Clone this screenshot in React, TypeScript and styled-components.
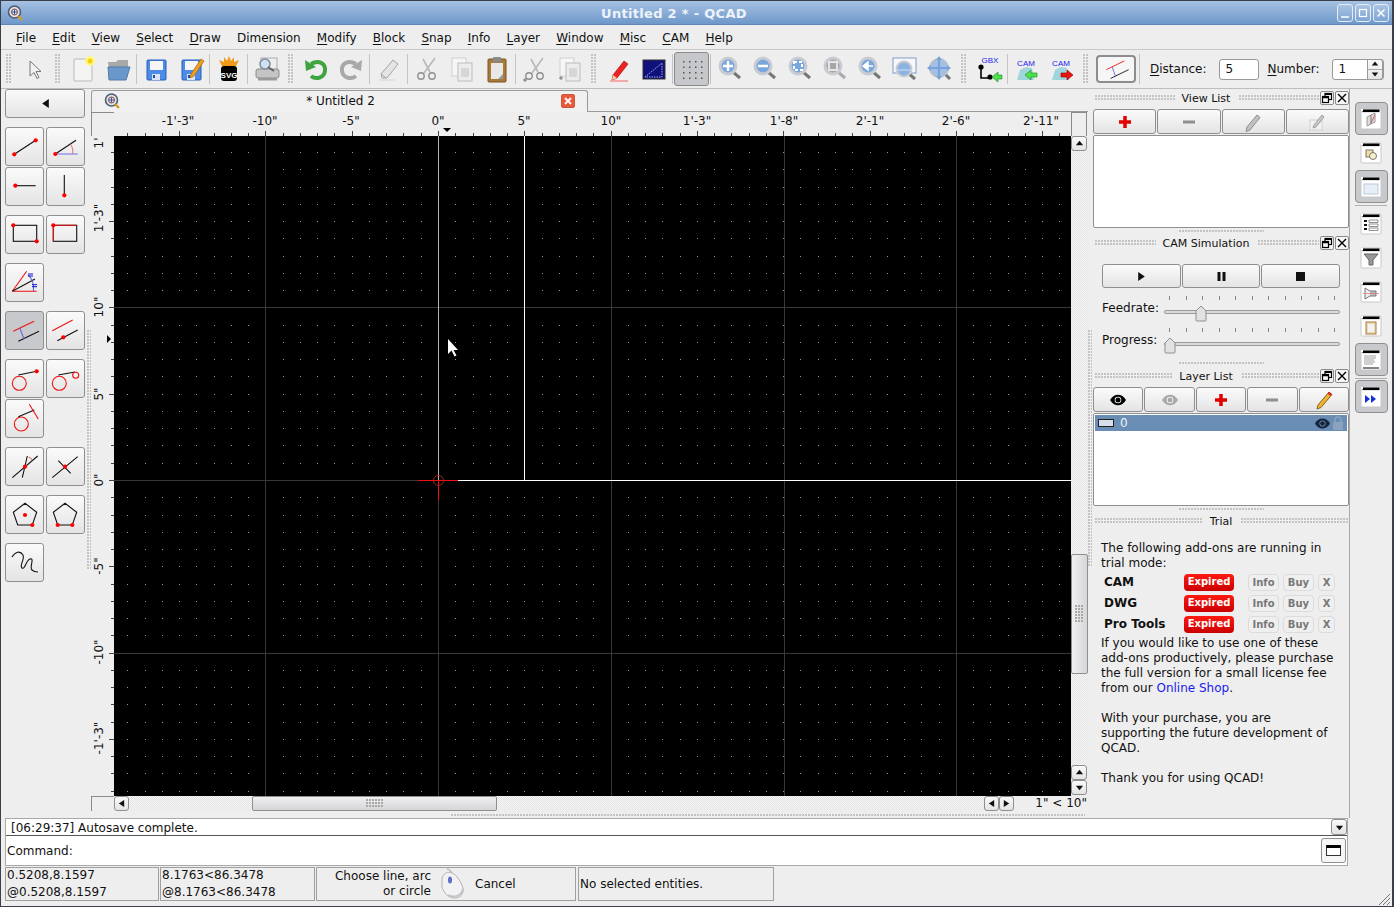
import React from "react";
import styled, { createGlobalStyle } from "styled-components";

const GlobalStyle = createGlobalStyle`
  html, body { margin: 0; padding: 0; background: #eee; }
  * { box-sizing: border-box; }
`;

const FONT = `"DejaVu Sans", "Liberation Sans", sans-serif`;
const DOTS = `radial-gradient(circle at 1px 1px, #c4c4c4 1px, transparent 1px)`;
const RAISED = `linear-gradient(#fafafa, #e4e4e4)`;

const Window = styled.div`
  width: 1394px;
  height: 907px;
  overflow: hidden;
  display: flex;
  flex-direction: column;
  background: #eeeeee;
  border: 1px solid #39404c;
  border-right-width: 2px;
  font: 12px ${FONT};
  color: #111;
`;

const TitleBar = styled.div`
  height: 24px;
  flex: none;
  display: flex;
  align-items: center;
  padding: 0 3px 0 6px;
  background: linear-gradient(#a6c1e2, #6e98ca);
  border-bottom: 1px solid #5d84b4;
`;

const TitleText = styled.div`
  flex: 1;
  padding: 1px 10px 0 0;
  text-align: center;
  color: #eef3fa;
  font-weight: bold;
  font-size: 13px;
  letter-spacing: 0.3px;
`;

const WinButton = styled.div`
  width: 16px;
  height: 18px;
  margin-left: 2px;
  border: 1px solid #e4ecf6;
  border-radius: 3px;
  background: linear-gradient(#a9c3e3, #7ea4d2);
  display: flex;
  align-items: center;
  justify-content: center;
`;

const MenuBar = styled.div`
  height: 24px;
  flex: none;
  display: flex;
  align-items: center;
  padding: 2px 0 0 7px;
`;

const MenuItem = styled.div`
  padding: 0 8px;
  margin-right: 0.15px;
  u { text-underline-offset: 2px; }
`;

const ToolBar = styled.div`
  height: 40px;
  flex: none;
  display: flex;
  align-items: center;
  padding-left: 1px;
  border-top: 1px solid #c9c9c9;
  border-bottom: 1px solid #bdbdbd;
`;

const Handle = styled.div`
  width: 14px;
  height: 30px;
  flex: none;
  display: flex;
  justify-content: center;
  &::before {
    content: "";
    width: 6px;
    background-image: ${DOTS};
    background-size: 3px 3px;
  }
`;

const Sep = styled.div`
  width: 1px;
  height: 30px;
  flex: none;
  margin: 0 1px;
  background: #c4c4c4;
`;

const ToolIcon = styled.div<{ $on?: boolean }>`
  width: 35px;
  height: 34px;
  flex: none;
  display: flex;
  align-items: center;
  justify-content: center;
  border-radius: 3px;
  ${(p) => p.$on && "background: #c6c7cb; border: 1px solid #8a8a8a;"}
`;

const OptionButton = styled.div`
  width: 40px;
  height: 28px;
  flex: none;
  margin-left: 3px;
  margin-right: 2px;
  border: 2px solid #8d8d8d;
  border-radius: 4px;
  background: #f6f6f6;
  display: flex;
  align-items: center;
  justify-content: center;
`;

const OptionLabel = styled.div<{ $left: number }>`
  margin-left: ${(p) => p.$left}px;
  u { text-underline-offset: 2px; }
`;

const TextBox = styled.div<{ $width: number; $left: number }>`
  width: ${(p) => p.$width}px;
  height: 21px;
  margin-left: ${(p) => p.$left}px;
  padding-left: 6px;
  line-height: 19px;
  background: #fff;
  border: 1px solid #999;
  border-radius: 3px;
  display: flex;
  justify-content: space-between;
`;

const Spin = styled.div`
  width: 16px;
  margin-top: -1px;
  height: 21px;
  display: flex;
  flex-direction: column;
  border: 1px solid #999;
  border-radius: 0 3px 3px 0;
  background: ${RAISED};
`;

const SpinPart = styled.div`
  flex: 1;
  display: flex;
  align-items: center;
  justify-content: center;
  & + & { border-top: 1px solid #aaa; }
`;

const Main = styled.div`
  height: 729px;
  flex: none;
  display: flex;
`;

const LeftPanel = styled.div`
  width: 90px;
  flex: none;
  display: flex;
`;

const ToolColumn = styled.div`
  width: 86px;
  flex: none;
  padding-left: 4px;
  display: flex;
  flex-direction: column;
`;

const BackButton = styled.div`
  width: 80px;
  height: 29px;
  margin-bottom: 9px;
  border: 1px solid #8f8f8f;
  border-radius: 3px;
  background: ${RAISED};
  display: flex;
  align-items: center;
  justify-content: center;
`;

const ToolGroup = styled.div`
  display: grid;
  grid-template-columns: 39px 39px;
  column-gap: 2px;
  row-gap: 1px;
  margin-bottom: 9px;
`;

const ToolButton = styled.div<{ $on?: boolean }>`
  width: 39px;
  height: 39px;
  border: 1px solid #8f8f8f;
  border-radius: 3px;
  background: ${(p) => (p.$on ? "#c8c9cd" : RAISED)};
`;

const VGrip = styled.div<{ $top: number; $height: number }>`
  width: 4px;
  height: ${(p) => p.$height}px;
  margin-top: ${(p) => p.$top}px;
  flex: none;
  background-image: ${DOTS};
  background-size: 3px 3px;
`;

const Center = styled.div`
  width: 997px;
  flex: none;
  display: flex;
  flex-direction: column;
`;

const TabRow = styled.div`
  height: 23px;
  flex: none;
  display: flex;
`;

const Tab = styled.div`
  width: 497px;
  margin-top: 1px;
  padding: 0 12px 2px;
  display: flex;
  align-items: center;
  border: 1px solid #9a9a9a;
  border-bottom: none;
  border-radius: 3px 3px 0 0;
  background: #f0f0f0;
`;

const TabTitle = styled.div`
  flex: 1;
  text-align: center;
`;

const TabRest = styled.div`
  flex: 1;
  border-bottom: 1px solid #9a9a9a;
`;

const ViewGrid = styled.div`
  display: grid;
  grid-template-columns: 23px 957px 17px;
  grid-template-rows: 24px 660px 15px;
`;

const CornerBox = styled.div`
  border-left: 1px solid #8a8a8a;
  border-top: 1px solid #8a8a8a;
`;

const CornerRight = styled.div`
  border: 1px solid #8a8a8a;
  border-bottom: none;
  margin-right: 1px;
`;

const ScrollButton = styled.div<{ $w: number; $h: number }>`
  width: ${(p) => p.$w}px;
  height: ${(p) => p.$h}px;
  flex: none;
  border: 1px solid #8f8f8f;
  border-radius: 3px;
  background: ${RAISED};
  display: flex;
  align-items: center;
  justify-content: center;
`;

const VScroll = styled.div`
  display: flex;
  flex-direction: column;
  background: repeating-conic-gradient(#e2e2e2 0 25%, #f7f7f7 0 50%) 0 0 / 2px 2px;
`;

const VHandle = styled.div`
  height: 120px;
  margin-top: 403px;
  margin-bottom: 91px;
  border: 1px solid #8f8f8f;
  border-radius: 2px;
  background: linear-gradient(90deg, #f0f0f0, #d6d6da);
  display: flex;
  align-items: center;
  justify-content: center;
`;

const HBar = styled.div`
  grid-column: 2 / 4;
  display: flex;
`;

const HTrack = styled.div`
  width: 855px;
  flex: none;
  background: repeating-conic-gradient(#e2e2e2 0 25%, #f7f7f7 0 50%) 0 0 / 2px 2px;
`;

const HHandle = styled.div`
  width: 245px;
  height: 15px;
  margin-left: 123px;
  border: 1px solid #8f8f8f;
  border-radius: 2px;
  background: linear-gradient(#f0f0f0, #d6d6da);
  display: flex;
  align-items: center;
  justify-content: center;
`;

const GripPatch = styled.div<{ $w: number; $h: number }>`
  width: ${(p) => p.$w}px;
  height: ${(p) => p.$h}px;
  background-image: radial-gradient(circle at 1px 1px, #a9a9a9 1px, transparent 1px);
  background-size: 3px 3px;
`;

const ScaleLabel = styled.div`
  flex: 1;
  text-align: right;
  padding-right: 1px;
  line-height: 15px;
`;

const HSplit = styled.div`
  height: 3px;
  margin: 3px 3px 0 360px;
  background-image: ${DOTS};
  background-size: 3px 3px;
`;

const Dock = styled.div`
  width: 262px;
  flex: none;
  display: flex;
  border-right: 1px solid #a8a8a8;
`;

const DockBody = styled.div`
  width: 256px;
  flex: none;
  margin-left: 1px;
  display: flex;
  flex-direction: column;
`;

const DockHeadWrap = styled.div`
  margin-top: 2px;
`;

const DockTitle = styled.div`
  height: 14px;
  flex: none;
  display: flex;
  align-items: center;
  font-size: 11px;
`;

const TitleGrip = styled.div`
  flex: 1;
  height: 6px;
  margin-left: 2px;
  background-image: ${DOTS};
  background-size: 3px 3px;
`;

const TitleLabel = styled.div`
  margin: 0 7px;
`;

const TitleBtn = styled.div`
  width: 14px;
  height: 14px;
  margin-left: 1px;
  border: 1px solid #8a8a8a;
  border-radius: 2px;
  background: #f6f6f6;
  display: flex;
  align-items: center;
  justify-content: center;
`;

const ButtonRow = styled.div`
  height: 25px;
  flex: none;
  margin-top: 4px;
  display: flex;
  gap: 1px;
`;

const DockButton = styled.div`
  flex: 1;
  border: 1px solid #8f8f8f;
  border-radius: 3px;
  background: ${RAISED};
  display: flex;
  align-items: center;
  justify-content: center;
`;

const ListBox = styled.div`
  height: 93px;
  flex: none;
  margin-top: 1px;
  padding: 1px;
  background: #fff;
  border: 1px solid #8f8f8f;
  border-radius: 2px;
`;

const LayerRow = styled.div`
  height: 16px;
  display: flex;
  align-items: center;
  padding: 0 2px 0 3px;
  background: #6a8db5;
  color: #eef3f8;
`;

const LayerName = styled.div`
  flex: 1;
  margin-left: 6px;
`;

const Splitter = styled.div<{ $top: number; $bottom: number }>`
  width: 85px;
  height: 3px;
  flex: none;
  margin: ${(p) => p.$top}px auto ${(p) => p.$bottom}px;
  background-image: ${DOTS};
  background-size: 3px 3px;
`;

const CamButtons = styled.div`
  height: 24px;
  flex: none;
  margin: 14px 9px 8px 9px;
  display: flex;
  gap: 1px;
`;

const SliderRow = styled.div`
  height: 32px;
  flex: none;
  display: flex;
  padding-left: 9px;
`;

const SliderLabel = styled.div`
  width: 62px;
  padding-top: 5px;
`;

const SliderBox = styled.div`
  position: relative;
  width: 176px;
`;

const Ticks = styled.div`
  height: 4px;
  padding: 0 5px;
  display: flex;
  justify-content: space-between;
`;

const Tick = styled.div`
  width: 1px;
  background: #888;
`;

const Track = styled.div`
  height: 4px;
  margin-top: 10px;
  background: #dcdcdc;
  border: 1px solid #9a9a9a;
  border-radius: 2px;
`;

const Thumb = styled.svg<{ $left: number }>`
  position: absolute;
  top: 9px;
  left: ${(p) => p.$left}px;
`;

const TrialBody = styled.div`
  padding: 13px 5px 0 8px;
  line-height: 15px;
`;

const TrialRows = styled.div`
  margin: 1px 0;
`;

const TrialRow = styled.div`
  height: 21px;
  display: flex;
  align-items: center;
  padding-left: 3px;
`;

const AddonName = styled.div`
  width: 80px;
  font-weight: bold;
`;

const Expired = styled.div`
  width: 50px;
  height: 17px;
  line-height: 16px;
  text-align: center;
  font-size: 10px;
  font-weight: bold;
  color: #fff;
  border-radius: 4px;
  background: linear-gradient(#ff1a12, #c90000);
`;

const TrialButton = styled.div<{ $w: number; $left?: number }>`
  width: ${(p) => p.$w}px;
  height: 17px;
  margin-left: ${(p) => p.$left ?? 4}px;
  line-height: 15px;
  text-align: center;
  font-size: 10px;
  font-weight: bold;
  color: #777;
  border: 1px solid #dcdcdc;
  border-radius: 4px;
  background: #efefef;
`;

const ShopLink = styled.span`
  color: #1a1aee;
`;

const RightBar = styled.div`
  flex: 1;
  padding-top: 13px;
  display: flex;
  flex-direction: column;
  align-items: center;
`;

const RightButton = styled.div<{ $on?: boolean }>`
  width: 33px;
  height: 33px;
  flex: none;
  margin-bottom: 1px;
  border-radius: 4px;
  display: flex;
  align-items: center;
  justify-content: center;
  ${(p) => p.$on && "background: #c8c9cd; border: 1px solid #8f8f8f;"}
`;

const RightSep = styled.div`
  width: 32px;
  height: 1px;
  flex: none;
  margin: 1px 0;
  background: #b0b0b0;
`;

const Command = styled.div`
  height: 48px;
  flex: none;
  margin: 0 44px 0 4px;
  display: flex;
  flex-direction: column;
  background: #fff;
  border: 1px solid #a8a8a8;
`;

const HistoryRow = styled.div`
  height: 17px;
  flex: none;
  display: flex;
  justify-content: space-between;
  padding-left: 5px;
  line-height: 18px;
  border-bottom: 1px solid #555;
`;

const CommandRow = styled.div`
  flex: 1;
  display: flex;
  align-items: center;
  justify-content: space-between;
  padding: 0 1px;
`;

const WidgetButton = styled.div`
  width: 25px;
  height: 25px;
  border: 1px solid #8f8f8f;
  border-radius: 3px;
  background: #f6f6f6;
  display: flex;
  align-items: center;
  justify-content: center;
`;

const StatusBar = styled.div`
  height: 34px;
  flex: none;
  margin-top: 1px;
  padding-left: 4px;
  display: flex;
  position: relative;
`;

const StatusBox = styled.div<{ $w: number; $left?: number }>`
  width: ${(p) => p.$w}px;
  margin-left: ${(p) => p.$left ?? 0}px;
  padding-left: 1px;
  border: 1px solid #a0a0a0;
  line-height: 17px;
  display: flex;
  flex-direction: column;
  justify-content: center;
`;

const ActionBox = styled(StatusBox)`
  flex-direction: row;
  justify-content: flex-start;
  align-items: center;
  line-height: 15px;
`;

const Prompt = styled.div`
  width: 113px;
  margin-right: 8px;
  text-align: right;
`;

const CancelText = styled.div`
  margin-left: 8px;
`;

const ResizeGrip = styled.svg`
  position: absolute;
  right: 1px;
  bottom: -5px;
`;

const Ico = ({ s = 28, vb = "0 0 28 28", children }: { s?: number; vb?: string; children: React.ReactNode }) => (
  <svg width={s} height={s} viewBox={vb}>
    {children}
  </svg>
);

const Logo = ({ s = 16 }: { s?: number }) => (
  <Ico s={s} vb="0 0 16 16">
    <circle cx="7.5" cy="7" r="6" fill="#dfe3e8" stroke="#4d5c70" strokeWidth="1.6" />
    <circle cx="7.5" cy="7" r="3" fill="none" stroke="#8a4a3a" />
    <path d="M5 7h5M7.5 4.5v5" stroke="#3355aa" strokeWidth="1" />
    <path d="M11 11l4 4" stroke="#d69a20" strokeWidth="2.4" />
  </Ico>
);

const ArrowIcon = () => (
  <Ico>
    <path d="M10 6v15l4-3.5 3 6 2-1-3-6h5z" fill="#f2f2f2" stroke="#777" />
  </Ico>
);
const NewIcon = () => (
  <Ico>
    <rect x="5" y="4" width="18" height="22" rx="1" fill="#f4f4f2" stroke="#b8b8b4" />
    <circle cx="21" cy="6" r="5" fill="#fff58a" />
    <circle cx="21" cy="6" r="2.5" fill="#f2d400" />
  </Ico>
);
const OpenIcon = () => (
  <Ico>
    <path d="M4 7h8l2-2h10v17H6z" fill="#a9a9a9" />
    <path d="M4 12h22l-4 13H5z" fill="#6a97cc" stroke="#4f7aa8" />
  </Ico>
);
const Floppy = () => (
  <>
    <rect x="5" y="5" width="19" height="20" rx="1" fill="#4d8ce6" stroke="#2a5cb4" />
    <rect x="8" y="6" width="13" height="9" fill="#f6f6f6" />
    <rect x="10" y="19" width="8" height="6" fill="#d8e2f0" />
    <rect x="11" y="20" width="2" height="3" fill="#1f4fa8" />
  </>
);
const SaveIcon = () => (
  <Ico>
    <Floppy />
  </Ico>
);
const SaveAsIcon = () => (
  <Ico>
    <Floppy />
    <path d="M14 19l10-15 3 2-10 15-4 2z" fill="#f0a020" stroke="#a06010" strokeWidth="0.7" />
  </Ico>
);
const SvgIcon = () => (
  <Ico>
    <path d="M14 1l2 5 3-4 0 5 5-2-3 6h-14l-3-6 5 2 0-5 3 4z" fill="#f09a18" />
    <rect x="6" y="11" width="16" height="15" rx="3" fill="#000" />
    <text x="14" y="23" textAnchor="middle" fontSize="8" fontWeight="bold" fontFamily="Liberation Sans" fill="#fff">
      SVG
    </text>
  </Ico>
);
const PrintIcon = () => (
  <Ico>
    <rect x="8" y="3" width="16" height="12" fill="#eee" stroke="#aaa" />
    <rect x="3" y="14" width="23" height="9" rx="2" fill="#c4c4c4" stroke="#8c8c8c" />
    <rect x="5" y="23" width="19" height="2.5" fill="#9a9a9a" />
    <circle cx="12" cy="9" r="5" fill="#cfe0f4" stroke="#7f8b9a" strokeWidth="1.5" />
    <path d="M15 12l6 4" stroke="#666" strokeWidth="2" />
  </Ico>
);
const UndoIcon = ({ c }: { c: string }) => (
  <Ico>
    <path d="M9 9c8-5 15 0 14 7s-9 9-14 5" fill="none" stroke={c} strokeWidth="4" />
    <path d="M3 5l1 11 10-4z" fill={c} />
  </Ico>
);
const RedoIcon = ({ c }: { c: string }) => (
  <Ico>
    <path d="M19 9c-8-5-15 0-14 7s9 9 14 5" fill="none" stroke={c} strokeWidth="4" />
    <path d="M25 5l-1 11-10-4z" fill={c} />
  </Ico>
);
const EraserIcon = () => (
  <Ico>
    <path d="M6 19l12-14 5 4-11 14-5 0z" fill="#e4e4e4" stroke="#a4a4a4" />
    <path d="M6 19l5 4" stroke="#a4a4a4" />
    <path d="M4 25h16" stroke="#dcdcdc" strokeWidth="1.5" />
  </Ico>
);
const ScissorsIcon = ({ plus }: { plus?: boolean }) => (
  <Ico>
    <path d="M22 3l-11 15M10 4l7 13" stroke="#b8b8b8" strokeWidth="1.6" fill="none" />
    <circle cx="8" cy="21" r="3.2" fill="none" stroke="#8f8f8f" strokeWidth="1.4" />
    <circle cx="19" cy="21" r="3.2" fill="none" stroke="#8f8f8f" strokeWidth="1.4" />
    {plus && <path d="M2 25h4M4 23v4" stroke="#777" />}
  </Ico>
);
const CopyIcon = ({ plus }: { plus?: boolean }) => (
  <Ico>
    <rect x="4" y="3" width="14" height="18" fill="#f6f6f6" stroke="#cfcfcf" />
    <rect x="10" y="8" width="14" height="18" fill="#ececec" stroke="#bcbcbc" />
    <rect x="13" y="13" width="8" height="9" fill="#d6d6d6" />
    {plus && <path d="M3 23h4M5 21v4" stroke="#777" />}
  </Ico>
);
const PasteIcon = () => (
  <Ico>
    <rect x="5" y="4" width="18" height="23" rx="1" fill="#a87a3c" stroke="#7c5520" />
    <rect x="8" y="8" width="12" height="16" fill="#e8e8e8" />
    <rect x="10" y="2" width="8" height="5" rx="1" fill="#8a8a8a" />
    <path d="M15 24l5-5v5z" fill="#999" />
  </Ico>
);
const PencilIcon = () => (
  <Ico>
    <path d="M8 20l11-14 4 3-11 14-5 2z" fill="#e22" stroke="#a11" strokeWidth="0.7" />
    <path d="M7 25l1-5 4 3z" fill="#f4d2a4" />
    <path d="M5 26h18" stroke="#f79090" strokeWidth="1.5" />
  </Ico>
);
const BlueBoxIcon = () => (
  <Ico>
    <rect x="3" y="5" width="22" height="19" fill="#10107a" stroke="#333" />
    <path d="M5 22l17-14v14z" fill="none" stroke="#9fb0ea" strokeDasharray="1.5 1" />
  </Ico>
);
const DotGridIcon = () => (
  <Ico>
    {[6, 11.5, 17, 22.5].map((y) =>
      [5, 11, 17, 23].map((x) => <rect key={`${x}-${y}`} x={x} y={y} width="1.5" height="1.5" fill="#555" />),
    )}
  </Ico>
);
const Lens = ({ children, c = "#7aa6de", handle = "#777" }: { children?: React.ReactNode; c?: string; handle?: string }) => (
  <Ico>
    <path d="M17 17l7 6" stroke={handle} strokeWidth="3" />
    <circle cx="12" cy="11" r="8" fill={c} stroke="#c8ccd2" strokeWidth="3" />
    {children}
  </Ico>
);
const ZoomPlus = () => (
  <Lens>
    <path d="M7 11h10M12 6v10" stroke="#fff" strokeWidth="2.5" />
  </Lens>
);
const ZoomMinus = () => (
  <Lens>
    <path d="M7 11h10" stroke="#fff" strokeWidth="2.5" />
  </Lens>
);
const ZoomFit = () => (
  <Lens>
    <rect x="8" y="7" width="8" height="8" fill="none" stroke="#fff" strokeWidth="2" strokeDasharray="3 2" />
  </Lens>
);
const ZoomGray = () => (
  <Lens c="#a6a6a6" handle="#aaa">
    <rect x="8" y="7" width="8" height="8" fill="none" stroke="#e6e6e6" strokeWidth="2" />
  </Lens>
);
const ZoomPrev = () => (
  <Lens>
    <path d="M7 11l5-4v8zM11 11h6" fill="#fff" stroke="#fff" strokeWidth="1.5" />
  </Lens>
);
const ZoomWindow = () => (
  <Ico>
    <rect x="2" y="3" width="23" height="15" fill="#f8f8f8" stroke="#7f9cc8" />
    <path d="M17 18l7 6" stroke="#777" strokeWidth="3" />
    <circle cx="13" cy="14" r="7.5" fill="#8cb2e2" stroke="#c8ccd2" strokeWidth="2" />
    <path d="M6 15h14" stroke="#cfe0f4" />
  </Ico>
);
const ZoomPan = () => (
  <Ico>
    <path d="M18 18l6 6" stroke="#777" strokeWidth="3" />
    <circle cx="13" cy="13" r="9" fill="#a2c0e6" stroke="#b8c0ca" strokeWidth="2" />
    <path d="M13 2v22M2 13h22" stroke="#7aa2da" strokeWidth="2" />
    <path d="M13 1l-3 4h6zM13 25l-3-4h6zM1 13l4-3v6zM25 13l-4-3v6z" fill="#7aa2da" />
  </Ico>
);
const GbxIcon = () => (
  <Ico>
    <text x="15" y="8" textAnchor="middle" fontSize="8" fontFamily="Liberation Sans" fill="#2222ee">
      GBX
    </text>
    <path d="M6 12v11h10" fill="none" stroke="#000" strokeWidth="1.6" />
    <circle cx="6" cy="12" r="2.6" fill="#000" />
    <circle cx="15" cy="22" r="2.6" fill="#000" />
    <path d="M17 22l6-5v3h4v4h-4v3z" fill="#4de04d" stroke="#198a19" strokeWidth="0.6" />
  </Ico>
);
const CamIcon = ({ out }: { out?: boolean }) => (
  <Ico>
    <path d="M4 25l3-10 6-3 6 1 2 12z" fill="#9fd6dc" />
    <text x="13" y="11" textAnchor="middle" fontSize="8" fontFamily="Liberation Sans" fill="#2222ee">
      CAM
    </text>
    {out ? (
      <path d="M25 20l-6-5v3h-6v4h6v3z" fill="#ee1111" stroke="#880000" strokeWidth="0.6" />
    ) : (
      <path d="M12 20l6-5v3h6v4h-6v3z" fill="#4de04d" stroke="#198a19" strokeWidth="0.6" />
    )}
  </Ico>
);
const OffsetIcon = () => (
  <Ico s={34} vb="0 0 39 39">
    <path d="M8.3 20.3L29 10.3" stroke="#ee2222" strokeWidth="1.1" />
    <path d="M13.3 30.3L34 20.3" stroke="#222" strokeWidth="1.1" />
    <path d="M15 17l4 11" stroke="#5566dd" strokeWidth="1" />
  </Ico>
);
const Tri = ({ d, s = 9, c = "#111" }: { d: "l" | "r" | "u" | "d"; s?: number; c?: string }) => {
  const pts = { l: "8,1 8,9 2,5", r: "2,1 2,9 8,5", u: "1,7 9,7 5,2", d: "1,3 9,3 5,8" }[d];
  return (
    <Ico s={s} vb="0 0 10 10">
      <polygon points={pts} fill={c} />
    </Ico>
  );
};

const Dot = ({ x, y }: { x: number; y: number }) => <circle cx={x} cy={y} r="2.1" fill="#f00" />;
const Ln = ({ d, c = "#111", w = 1.1 }: { d: string; c?: string; w?: number }) => (
  <path d={d} fill="none" stroke={c} strokeWidth={w} />
);
const Tool = ({ children, on }: { children: React.ReactNode; on?: boolean }) => (
  <ToolButton $on={on}>
    <svg width="37" height="37" viewBox="1 1 37 37">
      {children}
    </svg>
  </ToolButton>
);

const PENT = (a: number) => `M${a} 8.3L${a + 11.7} 17.3L${a + 7.3} 30L${a - 7.3} 30L${a - 11.7} 17.3Z`;

const Plus = () => (
  <Ico s={16} vb="0 0 16 16">
    <path d="M8 2v12M2 8h12" stroke="#e00000" strokeWidth="3.5" />
  </Ico>
);
const Minus = () => (
  <Ico s={16} vb="0 0 16 16">
    <path d="M2 8h12" stroke="#8f8f8f" strokeWidth="3" />
  </Ico>
);
const GrayPencil = () => (
  <Ico s={20} vb="0 0 20 20">
    <path d="M4 15L14 3l3 2.5L7 18l-4 1.5z" fill="#c0c0c0" stroke="#8f8f8f" />
  </Ico>
);
const BoxPencil = () => (
  <Ico s={20} vb="0 0 20 20">
    <rect x="3" y="8" width="12" height="10" fill="#f2f2f2" stroke="#d0d0d0" />
    <path d="M7 13L15 3l2 2-8 10-3 1z" fill="#c8c8c8" stroke="#a0a0a0" />
  </Ico>
);
const OrangePencil = () => (
  <Ico s={20} vb="0 0 20 20">
    <path d="M4 15L15 2l3 2.5L7 17.5l-4 1.5z" fill="#f0b030" stroke="#8a6020" />
    <path d="M15 2l3 2.5-1.5 1.5-3-2.5z" fill="#d22" />
  </Ico>
);
const Eye = ({ c = "#000", s = 18, ring = "#fff" }: { c?: string; s?: number; ring?: string }) => (
  <Ico s={s} vb="0 0 18 18">
    <path d="M1 9c4-7 12-7 16 0-4 7-12 7-16 0z" fill={c} />
    <circle cx="9" cy="9" r="3.3" fill={ring} />
    <circle cx="9" cy="9" r="2.5" fill={c} />
  </Ico>
);
const Lock = () => (
  <Ico s={14} vb="0 0 14 14">
    <rect x="2" y="6" width="10" height="8" fill="#8ba3bf" />
    <path d="M4 6V4a3 3 0 016 0v2" fill="none" stroke="#8ba3bf" strokeWidth="1.5" />
  </Ico>
);
const FloatIco = () => (
  <Ico s={12} vb="0 0 12 12">
    <rect x="4" y="1.5" width="6.5" height="6" fill="none" stroke="#000" strokeWidth="1.2" />
    <rect x="1.5" y="4.5" width="6" height="6" fill="#f6f6f6" stroke="#000" strokeWidth="1.2" />
    <path d="M1.5 5.5h6M4 2.2h6.5" stroke="#000" strokeWidth="1.5" />
  </Ico>
);
const CloseIco = () => (
  <Ico s={12} vb="0 0 12 12">
    <path d="M2 2l8 8M10 2l-8 8" stroke="#000" strokeWidth="1.4" />
  </Ico>
);

const DockHead = ({ title, buttons = true }: { title: string; buttons?: boolean }) => (
  <DockTitle>
    <TitleGrip />
    <TitleLabel>{title}</TitleLabel>
    <TitleGrip />
    {buttons && (
      <>
        <TitleBtn>
          <FloatIco />
        </TitleBtn>
        <TitleBtn>
          <CloseIco />
        </TitleBtn>
      </>
    )}
  </DockTitle>
);

const DockIcon = ({ children }: { children?: React.ReactNode }) => (
  <Ico s={24} vb="0 0 24 24">
    <rect x="2" y="2" width="20" height="20" rx="1" fill="#fff" stroke="#c8c8c8" />
    <rect x="3.5" y="2.5" width="17" height="2.6" fill="#000" />
    <rect x="2" y="2" width="2" height="2" fill="#fff" />
    {children}
  </Ico>
);

const SliderThumb = ({ left }: { left: number }) => (
  <Thumb $left={left} width="12" height="17" viewBox="0 0 12 17">
    <path d="M1 6l5-5 5 5v9a1 1 0 01-1 1H2a1 1 0 01-1-1z" fill="#e2e2e2" stroke="#8f8f8f" />
  </Thumb>
);

const CanvasView = () => {
  const step = 17.26;
  const xs = Array.from({ length: 57 }, (_, i) => Math.round(438 + (i - 19) * step));
  const ys = Array.from({ length: 40 }, (_, i) => Math.round(480 + (i - 20) * step));
  return (
    <svg width="957" height="660" viewBox="114 136 957 660" style={{ display: "block", background: "#000" }}>
      {ys.map((y) => xs.map((x) => <rect key={`${x}-${y}`} x={x} y={y} width="1" height="1" fill="#9a9a9a" />))}
      {[265.5, 611.5, 784.5, 956.5].map((x) => (
        <path key={x} d={`M${x} 136V796`} stroke="#383838" />
      ))}
      {[307.5, 653.5].map((y) => (
        <path key={y} d={`M114 ${y}H1071`} stroke="#383838" />
      ))}
      <path d="M438.5 480V796" stroke="#383838" />
      <path d="M114 480.5H420" stroke="#383838" />
      <path d="M524.5 136V480M458 480.5H1071" stroke="#fff" />
      <path d="M418 480.5H458M438.5 480V500" stroke="#f01010" />
      <path d="M438.5 136V480" stroke="#b4b4b4" />
      <circle cx="438.5" cy="480.5" r="5" fill="none" stroke="#a82020" />
      <path d="M448 339v15l3.5-3.5 3 6 2-1-3-5.5h4.5z" fill="#fff" />
    </svg>
  );
};

const RULER_FONT = { fontFamily: "DejaVu Sans", fontSize: 12, fill: "#111" };

const TopRuler = () => {
  const labels: [number, string][] = [
    [178, `-1'-3"`],
    [265, `-10"`],
    [351, `-5"`],
    [438, `0"`],
    [524, `5"`],
    [611, `10"`],
    [697, `1'-3"`],
    [784, `1'-8"`],
    [870, `2'-1"`],
    [956, `2'-6"`],
    [1041, `2'-11"`],
  ];
  const ticks = Array.from({ length: 56 }, (_, i) => i - 19);
  return (
    <svg width="957" height="24" viewBox="114 112 957 24" style={{ display: "block" }}>
      {labels.map(([x, t]) => (
        <text key={t} x={x} y="125" textAnchor="middle" {...RULER_FONT}>
          {t}
        </text>
      ))}
      {ticks.map((i) => {
        const x = Math.round(438 + i * 17.26) + 0.5;
        return <path key={i} d={`M${x} ${i % 5 === 0 ? 131 : 133}V136`} stroke="#444" />;
      })}
      <polygon points="443,128 451,128 447,132" fill="#000" />
    </svg>
  );
};

const LeftRuler = () => {
  const labels: [number, string][] = [
    [143, `1'`],
    [218, `1'-3"`],
    [307, `10"`],
    [394, `5"`],
    [480, `0"`],
    [566, `-5"`],
    [652, `-10"`],
    [738, `-1'-3"`],
  ];
  const ticks = Array.from({ length: 38 }, (_, i) => i - 19);
  return (
    <svg width="23" height="660" viewBox="91 136 23 660" style={{ display: "block" }}>
      {labels.map(([y, t]) => (
        <text key={t} transform={`translate(103 ${y}) rotate(-90)`} textAnchor="middle" {...RULER_FONT}>
          {t}
        </text>
      ))}
      {ticks.map((i) => {
        const y = Math.round(480 + i * 17.26) + 0.5;
        return <path key={i} d={`M${i % 5 === 0 ? 109 : 111} ${y}H114`} stroke="#444" />;
      })}
      <polygon points="107,335 107,343 111,339" fill="#000" />
    </svg>
  );
};

const MouseIcon = () => (
  <svg width="28" height="32" viewBox="0 0 28 32">
    <path d="M8 1c2 0 3 1 5 4" fill="none" stroke="#999" />
    <path d="M3 11c1-6 6-8 10-6 5 2 9 9 11 15 1 6-3 10-8 10-7 0-11-5-13-11z" fill="#f2f2f4" stroke="#b4b4b8" />
    <ellipse cx="11" cy="12" rx="2" ry="3.5" fill="#5a70c8" />
    <path d="M9 27c5 3 13 2 15-6" fill="none" stroke="#c4c4c8" strokeWidth="2" />
  </svg>
);

export default function App() {
  const menus: [string, string][] = [
    ["F", "ile"],
    ["E", "dit"],
    ["V", "iew"],
    ["S", "elect"],
    ["D", "raw"],
    ["", "Dimension"],
    ["M", "odify"],
    ["B", "lock"],
    ["S", "nap"],
    ["I", "nfo"],
    ["L", "ayer"],
    ["W", "indow"],
    ["M", "isc"],
    ["C", "AM"],
    ["H", "elp"],
  ];
  const addons = ["CAM", "DWG", "Pro Tools"];
  return (
    <>
      <GlobalStyle />
      <Window>
        <TitleBar>
          <Logo />
          <TitleText>Untitled 2 * - QCAD</TitleText>
          <WinButton>
            <Ico s={12} vb="0 0 12 12">
              <path d="M2 10h8" stroke="#fff" strokeWidth="1.5" />
            </Ico>
          </WinButton>
          <WinButton>
            <Ico s={12} vb="0 0 12 12">
              <rect x="2.5" y="2.5" width="7" height="7" fill="none" stroke="#fff" strokeWidth="1.2" />
            </Ico>
          </WinButton>
          <WinButton>
            <Ico s={12} vb="0 0 12 12">
              <path d="M2.5 2.5l7 7M9.5 2.5l-7 7" stroke="#fff" strokeWidth="1.5" />
            </Ico>
          </WinButton>
        </TitleBar>

        <MenuBar>
          {menus.map(([k, rest]) => (
            <MenuItem key={k + rest}>
              <u>{k}</u>
              {rest}
            </MenuItem>
          ))}
        </MenuBar>

        <ToolBar>
          <Handle />
          <ToolIcon><ArrowIcon /></ToolIcon>
          <Handle />
          <ToolIcon><NewIcon /></ToolIcon>
          <ToolIcon><OpenIcon /></ToolIcon>
          <Sep />
          <ToolIcon><SaveIcon /></ToolIcon>
          <ToolIcon><SaveAsIcon /></ToolIcon>
          <Sep />
          <ToolIcon><SvgIcon /></ToolIcon>
          <Sep />
          <ToolIcon><PrintIcon /></ToolIcon>
          <Handle />
          <ToolIcon><UndoIcon c="#3fa33f" /></ToolIcon>
          <ToolIcon><RedoIcon c="#a8a8a8" /></ToolIcon>
          <Sep />
          <ToolIcon><EraserIcon /></ToolIcon>
          <Sep />
          <ToolIcon><ScissorsIcon /></ToolIcon>
          <ToolIcon><CopyIcon /></ToolIcon>
          <ToolIcon><PasteIcon /></ToolIcon>
          <Sep />
          <ToolIcon><ScissorsIcon plus /></ToolIcon>
          <ToolIcon><CopyIcon plus /></ToolIcon>
          <Handle />
          <ToolIcon><PencilIcon /></ToolIcon>
          <ToolIcon><BlueBoxIcon /></ToolIcon>
          <Sep />
          <ToolIcon $on><DotGridIcon /></ToolIcon>
          <Sep />
          <ToolIcon><ZoomPlus /></ToolIcon>
          <ToolIcon><ZoomMinus /></ToolIcon>
          <ToolIcon><ZoomFit /></ToolIcon>
          <ToolIcon><ZoomGray /></ToolIcon>
          <ToolIcon><ZoomPrev /></ToolIcon>
          <ToolIcon><ZoomWindow /></ToolIcon>
          <ToolIcon><ZoomPan /></ToolIcon>
          <Handle />
          <ToolIcon><GbxIcon /></ToolIcon>
          <Sep />
          <ToolIcon><CamIcon /></ToolIcon>
          <ToolIcon><CamIcon out /></ToolIcon>
          <Handle />
          <OptionButton><OffsetIcon /></OptionButton>
          <Sep />
          <OptionLabel $left={9}><u>D</u>istance:</OptionLabel>
          <TextBox $width={40} $left={12}>5</TextBox>
          <OptionLabel $left={9}><u>N</u>umber:</OptionLabel>
          <TextBox $width={52} $left={12}>
            1
            <Spin>
              <SpinPart><Tri d="u" s={8} /></SpinPart>
              <SpinPart><Tri d="d" s={8} /></SpinPart>
            </Spin>
          </TextBox>
        </ToolBar>

        <Main>
          <LeftPanel>
            <ToolColumn>
              <BackButton>
                <Tri d="l" s={11} />
              </BackButton>
              <ToolGroup>
                <Tool>
                  <Ln d="M9.3 27.3L30.7 13.3" />
                  <Dot x={9.3} y={27.3} />
                  <Dot x={30.7} y={13.3} />
                </Tool>
                <Tool>
                  <Ln d="M9.3 27L30 13.3" />
                  <Ln d="M9.3 27H31.7" c="#7777ee" />
                  <Ln d="M25 18c2 3 2 6 1.7 9" c="#ee7777" />
                  <Dot x={9.3} y={27} />
                </Tool>
                <Tool>
                  <Ln d="M10.3 18.7H30.7" />
                  <Dot x={10.3} y={18.7} />
                </Tool>
                <Tool>
                  <Ln d="M18.3 8V28.3" />
                  <Dot x={18.3} y={28.3} />
                </Tool>
              </ToolGroup>
              <ToolGroup>
                <Tool>
                  <rect x="8.3" y="10.3" width="23.4" height="16" fill="none" stroke="#111" strokeWidth="1.1" />
                  <Dot x={8.3} y={10.3} />
                  <Dot x={31.7} y={26.3} />
                </Tool>
                <Tool>
                  <rect x="7.3" y="10.3" width="23.4" height="16" fill="none" stroke="#111" strokeWidth="1.1" />
                  <Ln d="M7.3 26.3V10.3H30.7" c="#ee1111" />
                  <Dot x={7.3} y={10.3} />
                </Tool>
              </ToolGroup>
              <ToolGroup>
                <Tool>
                  <Ln d="M7.3 28.3L21.7 8.3M7.3 28.3H31.7" c="#ee1111" />
                  <Ln d="M7.3 28.3L30 16" />
                  <Ln d="M23 12c4 3 6 8 5.5 16" c="#6666dd" />
                  <Ln d="M23 11h5M23 13h5M27 21.7h5M27 23.7h5" c="#1111cc" w={1} />
                </Tool>
              </ToolGroup>
              <ToolGroup>
                <Tool on>
                  <Ln d="M8.3 20.3L29 10.3" c="#ee1111" />
                  <Ln d="M13.3 30.3L34 20.3" />
                  <Ln d="M15 17c1 4 3 8 4 11" c="#6666dd" />
                </Tool>
                <Tool>
                  <Ln d="M6.3 19.7L26.7 9" c="#ee1111" />
                  <Ln d="M11.3 29.7L31.7 19" />
                  <Dot x={17.3} y={26.3} />
                </Tool>
              </ToolGroup>
              <ToolGroup>
                <Tool>
                  <circle cx="14.3" cy="24.3" r="7" fill="none" stroke="#ee1111" strokeWidth="1.1" />
                  <Ln d="M13.3 16L31.7 12.3" />
                  <Dot x={31.7} y={12.3} />
                </Tool>
                <Tool>
                  <circle cx="13.3" cy="24.3" r="7" fill="none" stroke="#ee1111" strokeWidth="1.1" />
                  <Ln d="M12.3 16L29 13" />
                  <circle cx="29.7" cy="16.3" r="3" fill="none" stroke="#ee1111" strokeWidth="1.1" />
                </Tool>
                <Tool>
                  <circle cx="16.3" cy="25" r="7" fill="none" stroke="#ee1111" strokeWidth="1.1" />
                  <Ln d="M13.3 17.7L29.3 11" />
                  <Ln d="M24.3 5.3L33.3 20" c="#ee1111" />
                </Tool>
              </ToolGroup>
              <ToolGroup>
                <Tool>
                  <Ln d="M7.3 30.7L32.7 9M17.3 30.7L22.3 9" />
                  <Ln d="M23.5 10c2 .5 3 1.5 3.5 3" c="#ee7777" />
                  <Dot x={20} y={19.7} />
                </Tool>
                <Tool>
                  <Ln d="M6.3 30.7L31.7 9.7M12.3 13.7L24.7 26.3" />
                  <Dot x={19} y={19.7} />
                </Tool>
              </ToolGroup>
              <ToolGroup>
                <Tool>
                  <Ln d={PENT(20)} />
                  <Dot x={20} y={20} />
                  <Dot x={27.3} y={30} />
                </Tool>
                <Tool>
                  <Ln d={PENT(19)} />
                  <Dot x={11.7} y={30} />
                  <Dot x={26.3} y={30} />
                </Tool>
              </ToolGroup>
              <ToolGroup>
                <Tool>
                  <Ln d="M7 14C10 9 15 7 18 12C20 17 14 22 17 25C20 27 21 17 25 16C30 15 24 24 27 27C29 29 30 29 33 29" />
                </Tool>
              </ToolGroup>
            </ToolColumn>
            <VGrip $top={241} $height={240} />
          </LeftPanel>

          <Center>
            <TabRow>
              <Tab>
                <Logo />
                <TabTitle>* Untitled 2</TabTitle>
                <Ico s={14} vb="0 0 14 14">
                  <rect x="0.5" y="0.5" width="13" height="13" rx="1.5" fill="#ea5a3a" stroke="#c9593a" />
                  <path d="M4 4l6 6M10 4l-6 6" stroke="#fff" strokeWidth="1.8" />
                </Ico>
              </Tab>
              <TabRest />
            </TabRow>
            <ViewGrid>
              <CornerBox />
              <TopRuler />
              <CornerRight />
              <LeftRuler />
              <CanvasView />
              <VScroll>
                <ScrollButton $w={16} $h={15}><Tri d="u" /></ScrollButton>
                <VHandle><GripPatch $w={9} $h={18} /></VHandle>
                <ScrollButton $w={16} $h={15}><Tri d="u" /></ScrollButton>
                <ScrollButton $w={16} $h={15}><Tri d="d" /></ScrollButton>
              </VScroll>
              <CornerBox />
              <HBar>
                <ScrollButton $w={15} $h={15}><Tri d="l" /></ScrollButton>
                <HTrack>
                  <HHandle><GripPatch $w={18} $h={9} /></HHandle>
                </HTrack>
                <ScrollButton $w={15} $h={15}><Tri d="l" /></ScrollButton>
                <ScrollButton $w={15} $h={15}><Tri d="r" /></ScrollButton>
                <ScaleLabel>1" &lt; 10"</ScaleLabel>
              </HBar>
            </ViewGrid>
            <HSplit />
          </Center>

          <Dock>
            <VGrip $top={241} $height={236} />
            <DockBody>
              <DockHeadWrap>
                <DockHead title="View List" />
              </DockHeadWrap>
              <ButtonRow>
                <DockButton><Plus /></DockButton>
                <DockButton><Minus /></DockButton>
                <DockButton><GrayPencil /></DockButton>
                <DockButton><BoxPencil /></DockButton>
              </ButtonRow>
              <ListBox />
              <Splitter $top={2} $bottom={3} />
              <DockHead title="CAM Simulation" />
              <CamButtons>
                <DockButton><Tri d="r" s={11} /></DockButton>
                <DockButton>
                  <Ico s={11} vb="0 0 11 11">
                    <path d="M1.5 1h3v9h-3zM6.5 1h3v9h-3z" fill="#111" />
                  </Ico>
                </DockButton>
                <DockButton>
                  <Ico s={11} vb="0 0 11 11">
                    <rect x="1" y="1" width="9" height="9" fill="#111" />
                  </Ico>
                </DockButton>
              </CamButtons>
              <SliderRow>
                <SliderLabel>Feedrate:</SliderLabel>
                <SliderBox>
                  <Ticks>{Array.from({ length: 11 }, (_, i) => <Tick key={i} />)}</Ticks>
                  <Track />
                  <SliderThumb left={31} />
                </SliderBox>
              </SliderRow>
              <SliderRow>
                <SliderLabel>Progress:</SliderLabel>
                <SliderBox>
                  <Ticks>{Array.from({ length: 11 }, (_, i) => <Tick key={i} />)}</Ticks>
                  <Track />
                  <SliderThumb left={0} />
                </SliderBox>
              </SliderRow>
              <Splitter $top={2} $bottom={4} />
              <DockHead title="Layer List" />
              <ButtonRow>
                <DockButton><Eye /></DockButton>
                <DockButton><Eye c="#a8a8a8" /></DockButton>
                <DockButton><Plus /></DockButton>
                <DockButton><Minus /></DockButton>
                <DockButton><OrangePencil /></DockButton>
              </ButtonRow>
              <ListBox>
                <LayerRow>
                  <Ico s={16} vb="0 0 16 16">
                    <rect x="0.5" y="4.5" width="15" height="7" fill="#d6e0ec" stroke="#222" />
                  </Ico>
                  <LayerName>0</LayerName>
                  <Eye c="#14243c" s={17} ring="#6a8db5" />
                  <Lock />
                </LayerRow>
              </ListBox>
              <Splitter $top={2} $bottom={3} />
              <DockHead title="Trial" buttons={false} />
              <TrialBody>
                <div>
                  The following add-ons are running in
                  <br />
                  trial mode:
                </div>
                <TrialRows>
                  {addons.map((a) => (
                    <TrialRow key={a}>
                      <AddonName>{a}</AddonName>
                      <Expired>Expired</Expired>
                      <TrialButton $w={31} $left={14}>Info</TrialButton>
                      <TrialButton $w={31}>Buy</TrialButton>
                      <TrialButton $w={17}>X</TrialButton>
                    </TrialRow>
                  ))}
                </TrialRows>
                <div>
                  If you would like to use one of these
                  <br />
                  add-ons productively, please purchase
                  <br />
                  the full version for a small license fee
                  <br />
                  from our <ShopLink>Online Shop</ShopLink>.
                  <br />
                  <br />
                  With your purchase, you are
                  <br />
                  supporting the future development of
                  <br />
                  QCAD.
                  <br />
                  <br />
                  Thank you for using QCAD!
                </div>
              </TrialBody>
            </DockBody>
          </Dock>

          <RightBar>
            <RightButton $on>
              <DockIcon>
                <path d="M8 19v-9l4-2v9zM12 17V8l4-2v9z" fill="#ddd" stroke="#999" />
                <path d="M12 16l4-8" stroke="#e55" />
              </DockIcon>
            </RightButton>
            <RightButton>
              <DockIcon>
                <rect x="7" y="9" width="7" height="7" fill="#f0e0a0" stroke="#777" />
                <circle cx="14" cy="15" r="3.5" fill="#f8f0c8" stroke="#777" />
              </DockIcon>
            </RightButton>
            <RightButton $on>
              <DockIcon>
                <rect x="5" y="9" width="14" height="10" fill="#e8eef6" stroke="#b8c8e0" />
              </DockIcon>
            </RightButton>
            <RightSep />
            <RightButton>
              <DockIcon>
                <path d="M5 8h3v2H5zM5 12h3v2H5zM5 16h3v2H5z" fill="#111" />
                <path d="M10 8h9v2.5h-9zM10 12h9v2.5h-9zM10 16h9v2.5h-9z" fill="none" stroke="#777" strokeWidth="0.8" />
              </DockIcon>
            </RightButton>
            <RightButton>
              <DockIcon>
                <path d="M5 8h14l-5 6v5h-4v-5z" fill="#999" stroke="#666" />
              </DockIcon>
            </RightButton>
            <RightButton>
              <DockIcon>
                <path d="M6 8l5 3h6v5h-6l-5 3z" fill="#eee" stroke="#777" />
                <path d="M11 12h6M11 13.5h6M11 15h6" stroke="#777" strokeWidth="0.8" />
                <path d="M4 13.5h16" stroke="#e77" strokeWidth="0.7" />
              </DockIcon>
            </RightButton>
            <RightButton>
              <DockIcon>
                <rect x="7" y="8" width="10" height="12" fill="#e8d8b8" stroke="#a87a3c" />
                <rect x="9" y="10" width="6" height="8" fill="#f2f2f2" />
              </DockIcon>
            </RightButton>
            <RightButton $on>
              <DockIcon>
                <path d="M5 8h12M5 10h12M5 12h10M5 14h11M5 16h9" stroke="#777" strokeWidth="0.7" />
                <path d="M4 20h16" stroke="#333" strokeWidth="1.2" />
              </DockIcon>
            </RightButton>
            <RightSep />
            <RightButton $on>
              <DockIcon>
                <path d="M6 10l5 4-5 4zM12 10l5 4-5 4z" fill="#1430d8" />
              </DockIcon>
            </RightButton>
          </RightBar>
        </Main>

        <Command>
          <HistoryRow>
            [06:29:37] Autosave complete.
            <ScrollButton $w={16} $h={16}><Tri d="d" /></ScrollButton>
          </HistoryRow>
          <CommandRow>
            Command:
            <WidgetButton>
              <Ico s={17} vb="0 0 17 17">
                <rect x="1.5" y="3.5" width="14" height="10" fill="#fff" stroke="#333" />
                <rect x="1.5" y="3" width="14" height="3" fill="#000" />
              </Ico>
            </WidgetButton>
          </CommandRow>
        </Command>

        <StatusBar>
          <StatusBox $w={154}>
            <div>0.5208,8.1597</div>
            <div>@0.5208,8.1597</div>
          </StatusBox>
          <StatusBox $w={155} $left={1}>
            <div>8.1763&lt;86.3478</div>
            <div>@8.1763&lt;86.3478</div>
          </StatusBox>
          <ActionBox $w={260} $left={1}>
            <Prompt>
              Choose line, arc
              <br />
              or circle
            </Prompt>
            <MouseIcon />
            <CancelText>Cancel</CancelText>
          </ActionBox>
          <StatusBox $w={196} $left={2}>No selected entities.</StatusBox>
          <ResizeGrip width="14" height="14" viewBox="0 0 14 14">
            <path d="M2 13L13 2M6 13l7-7M10 13l3-3" stroke="#777" />
          </ResizeGrip>
        </StatusBar>
      </Window>
    </>
  );
}
